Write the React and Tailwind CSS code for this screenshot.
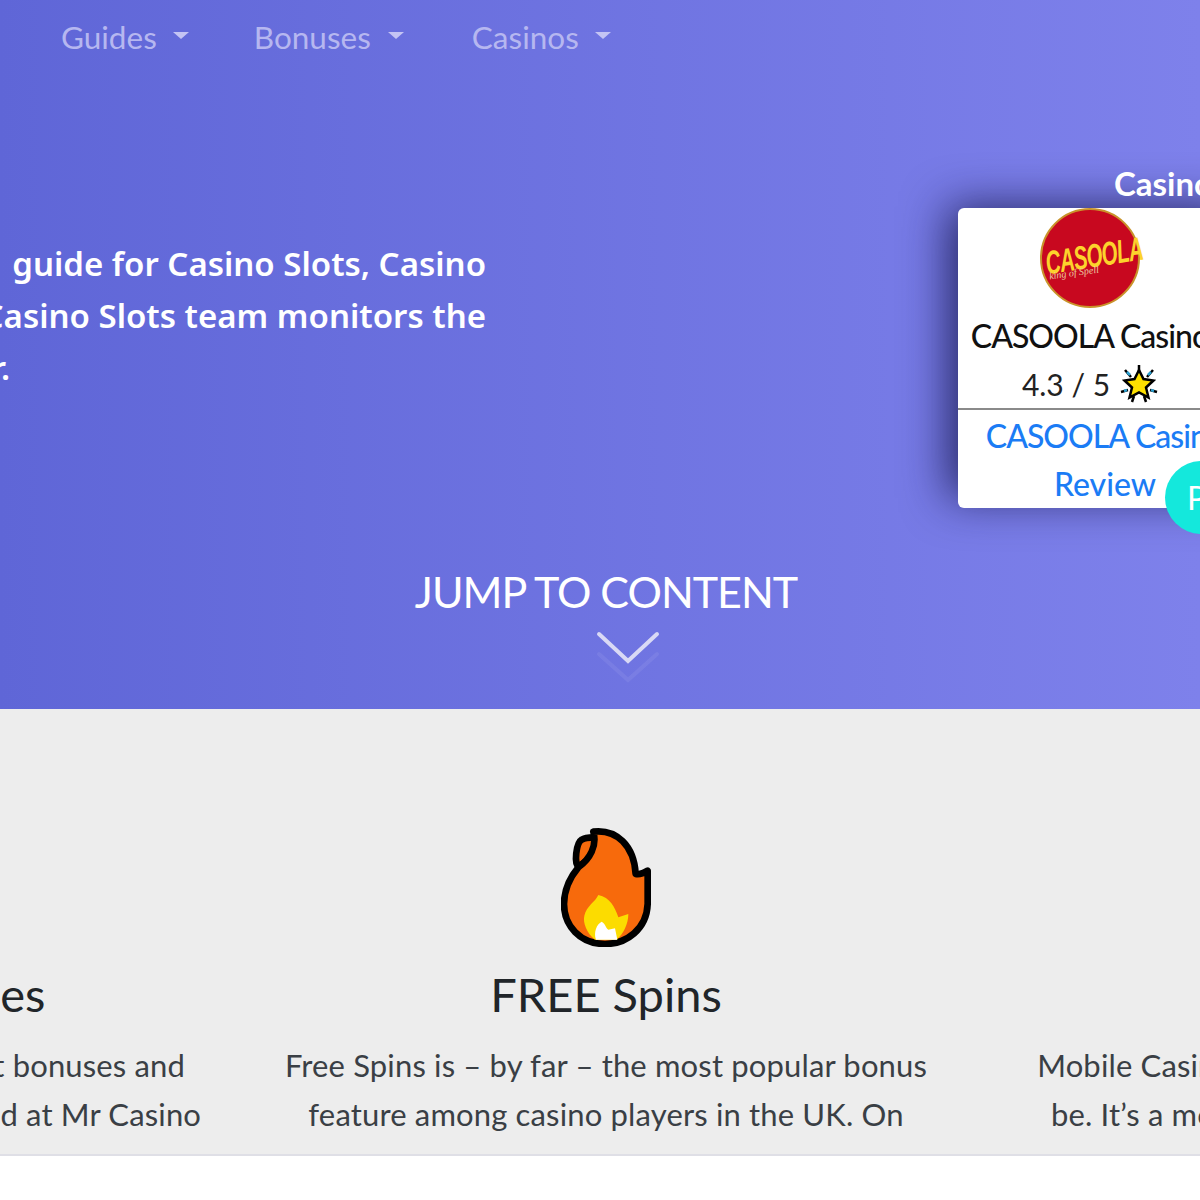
const sans = { fontFamily: '"Lato", "Noto Sans", sans-serif' };

function NavItem({ label, gap, caretGap }) {
  return (
    <div className="flex items-center text-[31.5px] text-[#b6b7f0]" style={{ marginRight: gap, columnGap: caretGap }}>
      <span>{label}</span>
      <span className="mb-[5px] h-0 w-0 border-x-[8px] border-t-[7px] border-x-transparent border-t-[#c4c4f4]" />
    </div>
  );
}

function Flame() {
  return (
    <svg width="90" height="119" viewBox="63 57 270 357">
      <path d="M115 172C102 165 108 102 125 92C135 85 150 85 162 85C175 115 150 155 115 172Z" fill="#f76a0c" stroke="#000" strokeWidth="20" strokeLinejoin="round" />
      <path d="M160 68C230 60 282 110 287 195C300 198 312 192 323 185L323 285C320 360 260 405 195 405C120 405 72 350 72 285C72 240 90 205 115 175C150 150 172 110 160 68Z" fill="#f76a0c" stroke="#000" strokeWidth="20" strokeLinejoin="round" />
      <path d="M175 258C210 265 225 295 235 325L265 315C265 345 250 375 230 392L165 392C140 372 128 340 133 320C140 290 165 280 175 258Z" fill="#fcdc00" />
      <path d="M185 338C198 345 195 355 205 362L225 358L232 392L168 392C160 370 170 345 185 338Z" fill="#fff" />
    </svg>
  );
}

function Star() {
  return (
    <svg width="38" height="38" viewBox="0 0 38 38">
      <path d="M19 0V6M5 5L11 12M33 5L27 12M1 27L8 25M37 27L30 25M12 37L14 31M26 37L24 31" stroke="#000" strokeWidth="2.5" />
      <path d="M7 7L10 10M31 7L28 10M4 26L7 25M34 26L31 25" stroke="#2a9fd0" strokeWidth="2.5" />
      <polygon points="19,5 23.5,14 33.5,15.5 26,22.5 28.5,32.5 19,27.5 9.5,32.5 12,22.5 4.5,15.5 14.5,14" fill="#fde000" stroke="#000" strokeWidth="2.5" />
    </svg>
  );
}

function Logo() {
  return (
    <div className="relative flex h-[100px] w-[100px] items-center justify-center overflow-visible rounded-full border-2 border-[#c9932b] bg-[#c8081f]">
      <span className="ml-[8px] mt-[-6px] -rotate-[9deg] scale-x-[0.62] whitespace-nowrap text-[33px] font-black italic leading-none tracking-[-1px] text-[#fcd32c]" style={{ fontFamily: '"Liberation Sans", sans-serif' }}>
        CASOOLA
      </span>
      <span className="absolute left-[7px] top-[58px] -rotate-[8deg] whitespace-nowrap text-[10px] italic leading-none text-[#ecc9a0]" style={{ fontFamily: '"Liberation Serif", serif' }}>
        king of Spell
      </span>
    </div>
  );
}

function Column({ icon, title, lines }) {
  return (
    <div className="flex flex-col items-center text-center">
      <div className="h-[119px]">{icon}</div>
      <div className="mt-[17px] whitespace-nowrap text-[47px] leading-[60px] text-[#212529]">{title}</div>
      <div className="mt-[17px] whitespace-nowrap text-[31px] leading-[49px] tracking-[0.15px] text-[#3a3f45]">
        {lines.map((l) => (
          <div key={l}>{l}</div>
        ))}
      </div>
    </div>
  );
}

export default function App() {
  return (
    <div className="relative h-[1200px] w-[1200px] overflow-hidden bg-white" style={sans}>
      <section className="h-[709px] bg-[linear-gradient(90deg,#5f66d7,#7e81eb)]">
        <nav className="flex h-[76px] items-center pl-[61px]">
          <NavItem label="Guides" gap={65} caretGap={16} />
          <NavItem label="Bonuses" gap={68} caretGap={17} />
          <NavItem label="Casinos" gap={0} caretGap={16} />
        </nav>

        <div className="mt-[83px] flex h-[349px] items-start">
          <div className="w-[486px] pt-[79px] text-[33px] font-semibold leading-[52px] text-white" style={{ fontFamily: '"Noto Sans", sans-serif' }}>
            <div className="flex justify-end whitespace-nowrap"><span>guide for Casino Slots, Casino</span></div>
            <div className="flex justify-end whitespace-nowrap"><span>Casino Slots team monitors the</span></div>
            <div className="flex w-[10px] justify-end whitespace-nowrap"><span>year.</span></div>
          </div>

          <div className="ml-[472px] w-[294px] shrink-0">
            <div className="h-[49px] pl-[156px] text-[33px] font-bold leading-[49px] text-white whitespace-nowrap">Casino Reviews</div>
            <div className="h-[300px] rounded-[6px] bg-white shadow-[-14px_-6px_45px_-4px_rgba(20,20,70,0.8)]">
              <div className="flex w-[264px] flex-col items-center text-center">
                <Logo />
                <div className="mt-[4px] whitespace-nowrap text-[32px] font-medium leading-[48px] tracking-[-1px] text-[#111]">CASOOLA Casino</div>
                <div className="flex h-[48px] items-center gap-[10px] text-[30px] text-[#222]">
                  <span>4.3 / 5</span>
                  <Star />
                </div>
              </div>
              <div className="border-t-2 border-[#8a8a8a] pt-[2px] text-center text-[32px] font-medium leading-[48px] text-[#1b7cf5]">
                <div className="whitespace-nowrap tracking-[-1px]">CASOOLA Casino</div>
                <div>Review</div>
              </div>
            </div>
          </div>
        </div>

        <div className="mt-[54px] flex flex-col items-center">
          <div className="ml-[12px] whitespace-nowrap text-[43px] leading-[60px] tracking-[-1px] text-white">JUMP TO CONTENT</div>
          <svg className="ml-[56px] mt-[8px]" width="64" height="54" viewBox="0 0 64 54" fill="none" strokeLinecap="round">
            <path d="M3 24L32 50L61 24" stroke="#ffffff" strokeOpacity="0.07" strokeWidth="4" />
            <path d="M3 4L32 31L61 4" stroke="#d9d9f5" strokeWidth="4" />
          </svg>
        </div>
      </section>

      <section className="h-[447px] border-b-2 border-[#dfdfe6] bg-[#ededed] pt-[119px]">
        <div className="-ml-[444px] grid w-[2100px] grid-cols-[700px_700px_700px]">
          <Column title="Best Bonuses" lines={["Find out all about the latest bonuses and", "promotions that can be found at Mr Casino"]} icon={null} />
          <Column icon={<Flame />} title="FREE Spins" lines={["Free Spins is – by far – the most popular bonus", "feature among casino players in the UK. On"]} />
          <Column title="Mobile" lines={["Mobile Casinos are the way gaming will", "be. It’s a modern way to play at home"]} icon={null} />
        </div>
      </section>

      <div className="absolute left-[1165px] top-[461px] flex h-[73px] w-[73px] items-center rounded-full bg-[#14e8dc] pl-[22px] text-[32px] text-white">P</div>
    </div>
  );
}
